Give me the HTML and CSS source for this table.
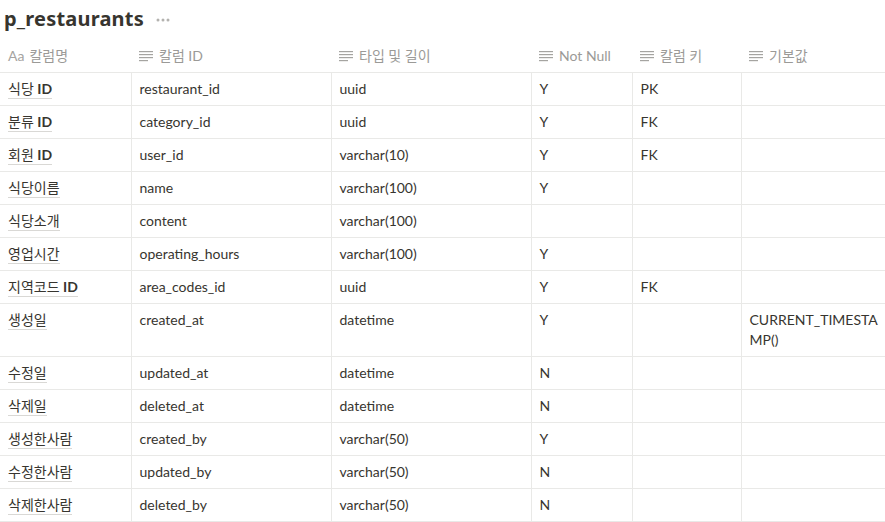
FILE: index.html
```html
<!DOCTYPE html>
<html lang="ko">
<head>
<meta charset="utf-8">
<title>p_restaurants</title>
<link rel="stylesheet" href="styles.css">
</head>
<body>
<div class="page">
  <div class="title-bar">
    <h1 class="title">p_restaurants</h1>
    <span class="more">
      <svg width="14" height="4" viewBox="0 0 14 4"><circle cx="2" cy="2" r="1.5"/><circle cx="7" cy="2" r="1.5"/><circle cx="12" cy="2" r="1.5"/></svg>
    </span>
  </div>
  <table class="db">
    <colgroup>
      <col class="c1"><col class="c2"><col class="c3"><col class="c4"><col class="c5"><col class="c6">
    </colgroup>
    <thead>
      <tr>
        <th><span class="hd"><span class="aa">Aa</span>칼럼명</span></th>
        <th><span class="hd"><svg class="ic" width="14" height="12" viewBox="0 0 14 12"><rect x="0" y="1" width="14" height="1.2"/><rect x="0" y="4" width="14" height="1.2"/><rect x="0" y="7" width="14" height="1.2"/><rect x="0" y="10" width="9" height="1.2"/></svg>칼럼 ID</span></th>
        <th><span class="hd"><svg class="ic" width="14" height="12" viewBox="0 0 14 12"><rect x="0" y="1" width="14" height="1.2"/><rect x="0" y="4" width="14" height="1.2"/><rect x="0" y="7" width="14" height="1.2"/><rect x="0" y="10" width="9" height="1.2"/></svg>타입 및 길이</span></th>
        <th><span class="hd"><svg class="ic" width="14" height="12" viewBox="0 0 14 12"><rect x="0" y="1" width="14" height="1.2"/><rect x="0" y="4" width="14" height="1.2"/><rect x="0" y="7" width="14" height="1.2"/><rect x="0" y="10" width="9" height="1.2"/></svg>Not Null</span></th>
        <th><span class="hd"><svg class="ic" width="14" height="12" viewBox="0 0 14 12"><rect x="0" y="1" width="14" height="1.2"/><rect x="0" y="4" width="14" height="1.2"/><rect x="0" y="7" width="14" height="1.2"/><rect x="0" y="10" width="9" height="1.2"/></svg>칼럼 키</span></th>
        <th><span class="hd"><svg class="ic" width="14" height="12" viewBox="0 0 14 12"><rect x="0" y="1" width="14" height="1.2"/><rect x="0" y="4" width="14" height="1.2"/><rect x="0" y="7" width="14" height="1.2"/><rect x="0" y="10" width="9" height="1.2"/></svg>기본값</span></th>
      </tr>
    </thead>
    <tbody>
      <tr><td><span class="name">식당 <b>ID</b></span></td><td>restaurant_id</td><td>uuid</td><td>Y</td><td>PK</td><td></td></tr>
      <tr><td><span class="name">분류 <b>ID</b></span></td><td>category_id</td><td>uuid</td><td>Y</td><td>FK</td><td></td></tr>
      <tr><td><span class="name">회원 <b>ID</b></span></td><td>user_id</td><td>varchar(10)</td><td>Y</td><td>FK</td><td></td></tr>
      <tr><td><span class="name">식당이름</span></td><td>name</td><td>varchar(100)</td><td>Y</td><td></td><td></td></tr>
      <tr><td><span class="name">식당소개</span></td><td>content</td><td>varchar(100)</td><td></td><td></td><td></td></tr>
      <tr><td><span class="name">영업시간</span></td><td>operating_hours</td><td>varchar(100)</td><td>Y</td><td></td><td></td></tr>
      <tr><td><span class="name">지역코드 <b>ID</b></span></td><td>area_codes_id</td><td>uuid</td><td>Y</td><td>FK</td><td></td></tr>
      <tr><td><span class="name">생성일</span></td><td>created_at</td><td>datetime</td><td>Y</td><td></td><td class="wrap">CURRENT_TIMESTAMP()</td></tr>
      <tr><td><span class="name">수정일</span></td><td>updated_at</td><td>datetime</td><td>N</td><td></td><td></td></tr>
      <tr><td><span class="name">삭제일</span></td><td>deleted_at</td><td>datetime</td><td>N</td><td></td><td></td></tr>
      <tr><td><span class="name">생성한사람</span></td><td>created_by</td><td>varchar(50)</td><td>Y</td><td></td><td></td></tr>
      <tr><td><span class="name">수정한사람</span></td><td>updated_by</td><td>varchar(50)</td><td>N</td><td></td><td></td></tr>
      <tr><td><span class="name">삭제한사람</span></td><td>deleted_by</td><td>varchar(50)</td><td>N</td><td></td><td></td></tr>
    </tbody>
  </table>
</div>
</body>
</html>
```
FILE: styles.css
```css
html, body {
  margin: 0;
  padding: 0;
  background: #ffffff;
}
body {
  font-family: "Lato", "Noto Sans CJK KR", sans-serif;
  color: #37352f;
  font-size: 14px;
}
.page {
  width: 885px;
}
.title-bar {
  display: flex;
  align-items: center;
  height: 40px;
  padding-left: 4px;
  box-sizing: border-box;
  padding-bottom: 2px;
}
.title {
  margin: 0;
  font-family: "Noto Sans", "Noto Sans CJK KR", sans-serif;
  font-size: 20px;
  font-weight: 700;
  line-height: 26px;
  color: #37352f;
  letter-spacing: 0.2px;
}
.more {
  display: flex;
  align-items: center;
  margin-left: 12px;
  margin-top: 2px;
}
.more svg {
  fill: #b3b2af;
}
.db {
  border-collapse: collapse;
  table-layout: fixed;
  width: 885px;
}
.c1 { width: 131px; }
.c2 { width: 200px; }
.c3 { width: 200px; }
.c4 { width: 101px; }
.c5 { width: 109px; }
.c6 { width: 144px; }
th, td {
  text-align: left;
  vertical-align: top;
  padding: 6px 8px;
  line-height: 20px;
  border-right: 1px solid #e9e9e7;
  border-bottom: 1px solid #e9e9e7;
  white-space: nowrap;
  overflow: hidden;
}
th:last-child, td:last-child {
  border-right: none;
}
th {
  font-weight: 400;
  color: #9b9a97;
  border-right: none;
}
.hd {
  display: flex;
  align-items: center;
}
.aa {
  font-size: 14px;
  margin-right: 5px;
  color: #a5a4a1;
}
.ic {
  fill: #a5a4a1;
  margin-right: 6px;
  flex: none;
}
.name {
  border-bottom: 1px solid #d9d8d5;
  padding-bottom: 1px;
}
.name b {
  font-weight: 700;
}
td.wrap {
  white-space: normal;
  word-break: break-all;
  padding-right: 2px;
}
```
